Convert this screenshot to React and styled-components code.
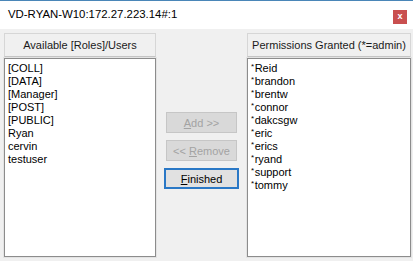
import React from "react"
import styled, { createGlobalStyle } from "styled-components"

const Global = createGlobalStyle`
	html, body {
		margin: 0;
		padding: 0;
		background: #f0f0f0;
	}
	body {
		font-family: "Liberation Sans", Arial, sans-serif;
		font-size: 11px;
		color: #000;
	}
`

const Window = styled.div`
	width: 413px;
	height: 261px;
	display: flex;
	flex-direction: column;
	overflow: hidden;
	background: #f0f0f0;
`

const TitleBar = styled.div`
	height: 28px;
	flex: none;
	display: flex;
	align-items: center;
	justify-content: space-between;
	background: #fff;
	border-top: 1px solid #4a86b8;
	padding: 0 6px 0 8px;
`

const Title = styled.span`
	font-size: 11.4px;
	color: #000;
	margin-top: -2px;
`

const CloseBox = styled.span`
	width: 14px;
	height: 14px;
	margin-top: 3px;
	background: #c94f4f;
	color: #fff;
	font-size: 9px;
	font-weight: bold;
	line-height: 13px;
	text-align: center;
`

const Body = styled.div`
	flex: 1;
	display: grid;
	grid-template-columns: 152px 1fr 164px;
	padding: 4px 2px 4px 4px;
	min-height: 0;
`

const Panel = styled.div`
	display: flex;
	flex-direction: column;
	min-height: 0;
`

const Header = styled.div`
	height: 24px;
	flex: none;
	display: flex;
	align-items: center;
	justify-content: center;
	box-sizing: border-box;
	border: 1px solid #d6d6d6;
	border-bottom-color: #c4c4c4;
	background: #f0f0f0;
	color: #1a1a1a;
`

const List = styled.ul`
	flex: 1;
	margin: 1px 0 0;
	padding: 3px 3px;
	list-style: none;
	background: #fff;
	border: 1px solid #8c8c8c;
	box-shadow: 0 0 0 1px #e3e3e3;
`

const Item = styled.li`
	height: 13px;
	line-height: 13px;
	white-space: nowrap;
`

const Star = styled.span`
	font-size: 8px;
	line-height: 0;
	vertical-align: 3px;
	margin-right: 0.5px;
`

const Middle = styled.div`
	display: flex;
	flex-direction: column;
	align-items: center;
	gap: 7px;
	padding-top: 79px;
`

const Button = styled.button`
	height: 21px;
	box-sizing: border-box;
	padding: 0;
	font-family: inherit;
	font-size: 11px;
	background: ${p => (p.disabled ? "#d9d9d9" : "#e1e1e1")};
	color: ${p => (p.disabled ? "#a3a3a3" : "#000")};
	border: ${p => (p.focused ? "2px solid #2a78c6" : "1px solid #c6c6c6")};
	width: ${p => (p.focused ? "75px" : "71px")};

	u {
		text-decoration-thickness: 1px;
	}
`

const available = ["[COLL]", "[DATA]", "[Manager]", "[POST]", "[PUBLIC]", "Ryan", "cervin", "testuser"]
const granted = ["Reid", "brandon", "brentw", "connor", "dakcsgw", "eric", "erics", "ryand", "support", "tommy"]

export default function App() {
	return (
		<Window>
			<Global />
			<TitleBar>
				<Title>VD-RYAN-W10:172.27.223.14#:1</Title>
				<CloseBox>x</CloseBox>
			</TitleBar>
			<Body>
				<Panel>
					<Header>Available [Roles]/Users</Header>
					<List>
						{available.map(name => (
							<Item key={name}>{name}</Item>
						))}
					</List>
				</Panel>
				<Middle>
					<Button disabled>
						<u>A</u>dd &gt;&gt;
					</Button>
					<Button disabled>
						&lt;&lt; <u>R</u>emove
					</Button>
					<Button focused>
						<u>F</u>inished
					</Button>
				</Middle>
				<Panel>
					<Header>Permissions Granted (*=admin)</Header>
					<List>
						{granted.map(name => (
							<Item key={name}>
								<Star>*</Star>
								{name}
							</Item>
						))}
					</List>
				</Panel>
			</Body>
		</Window>
	)
}
